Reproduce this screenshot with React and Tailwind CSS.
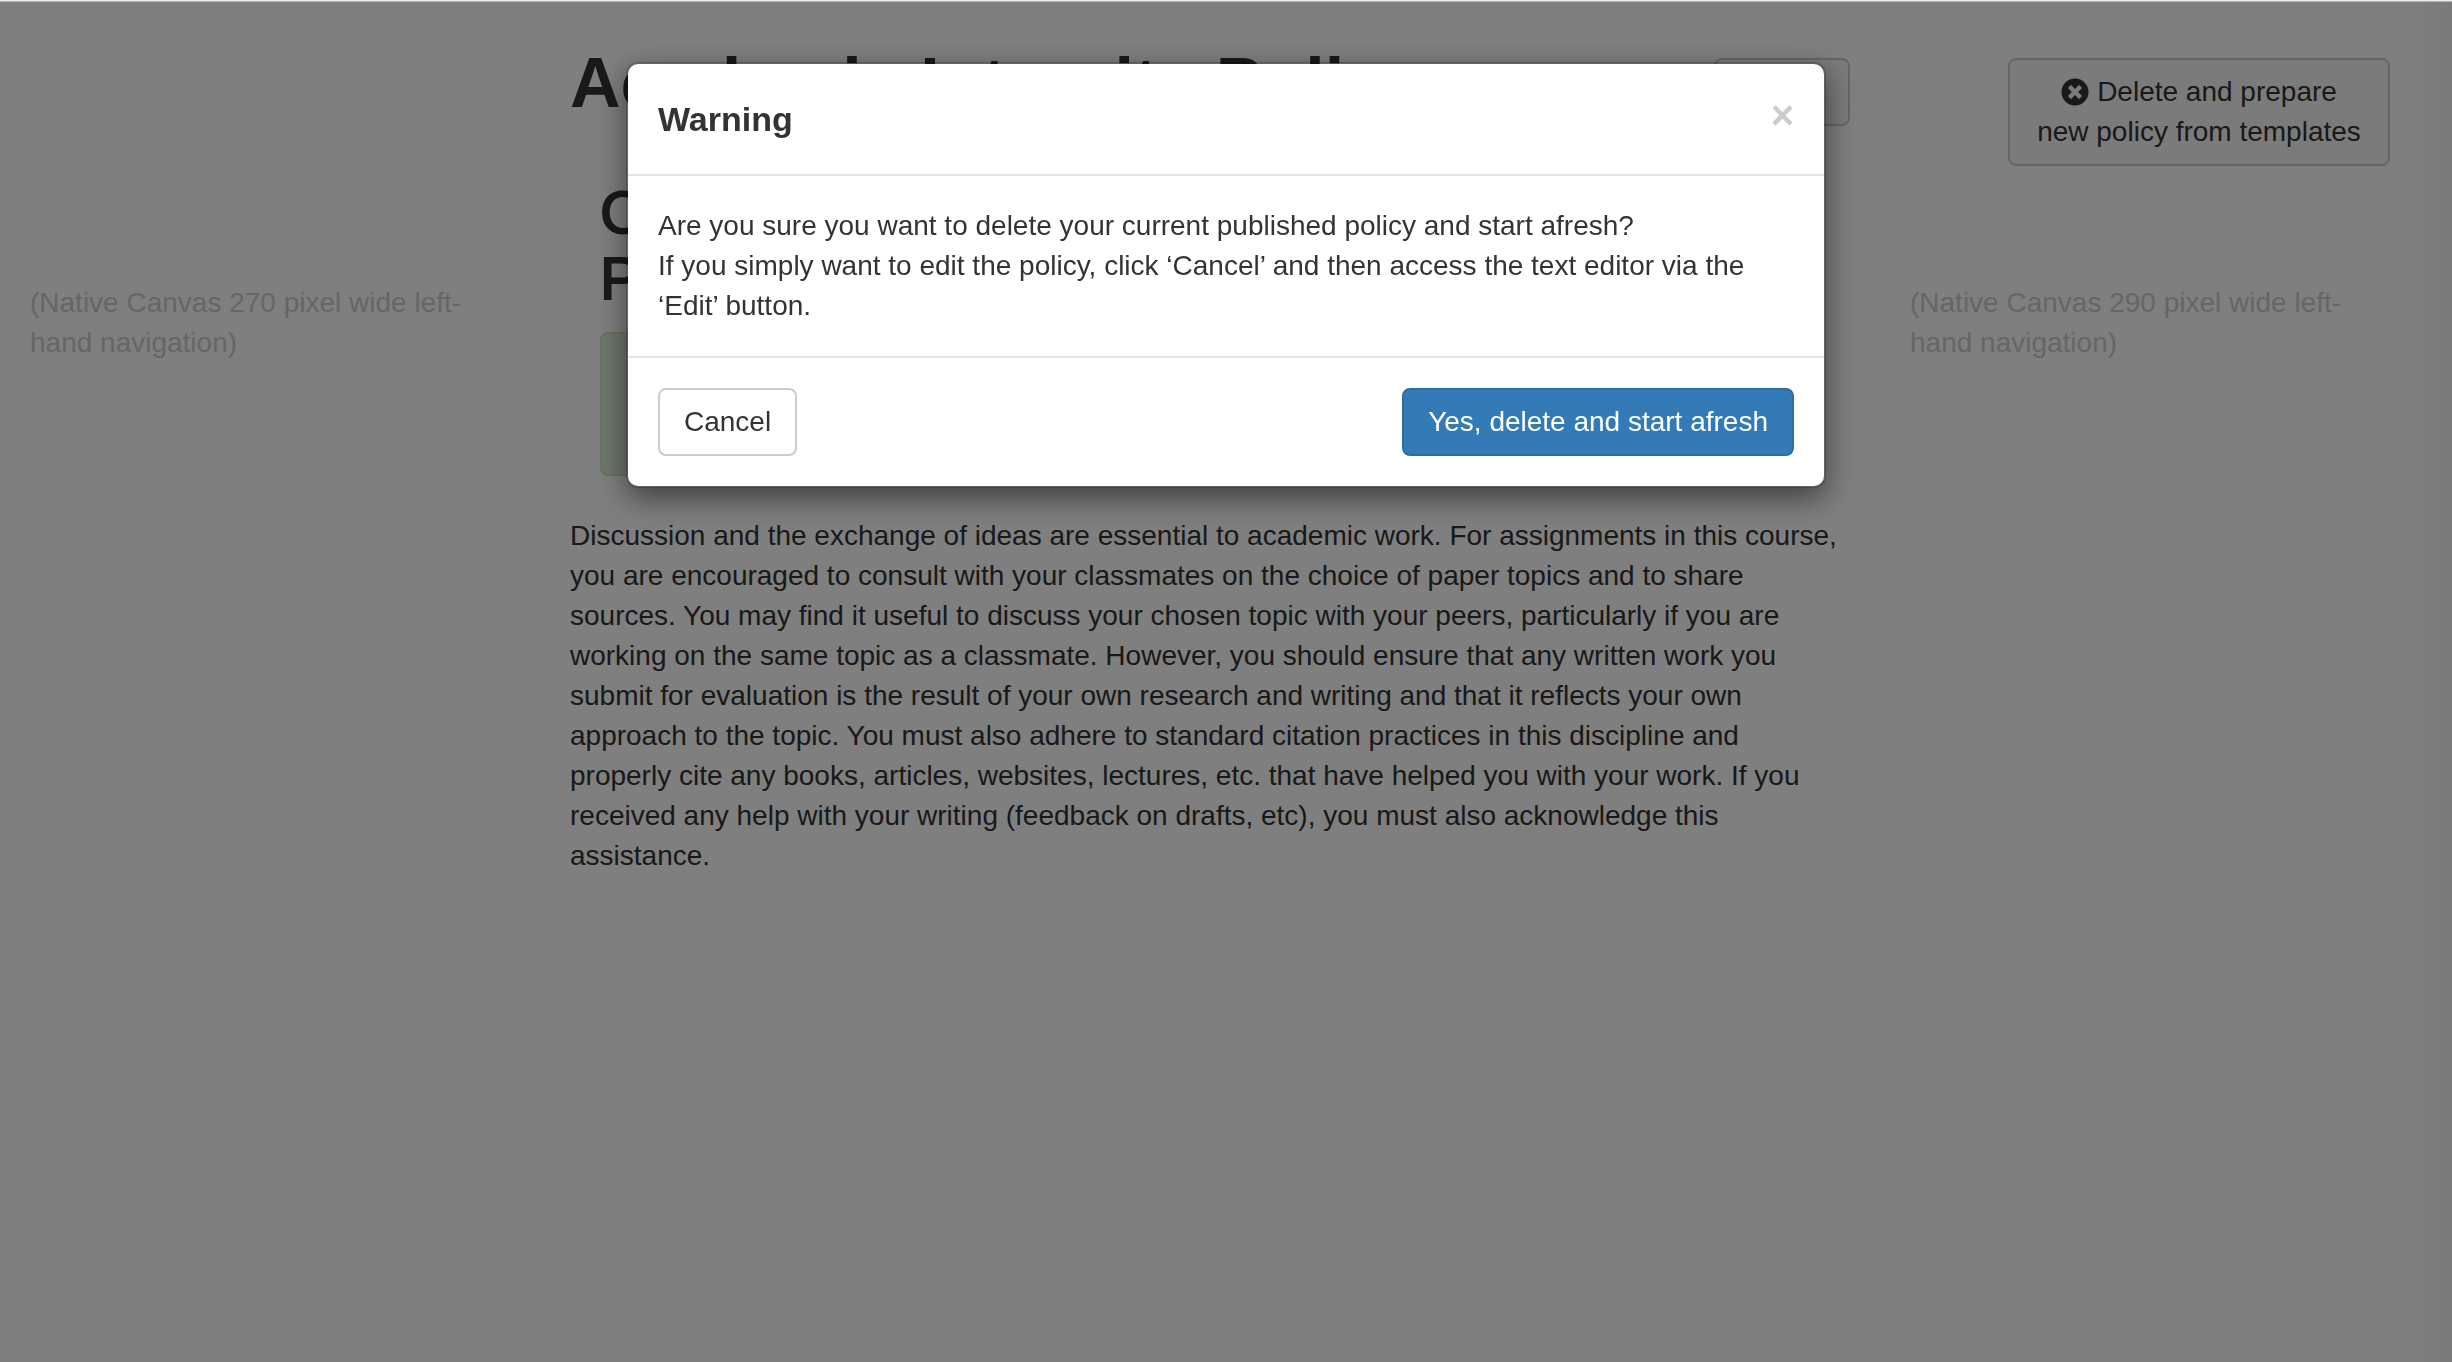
import { FaTimesCircle, FaPencilAlt } from "react-icons/fa";

const button = "rounded-lg border-2 border-[#ccc] px-6 py-3 text-center text-[#333]";

function Page() {
  return (
    <div className="flex items-start">
      <aside className="w-[540px] shrink-0 pt-[282px] pr-[60px] pl-[30px] text-[#ccc]">
        (Native Canvas 270 pixel wide left-hand navigation)
      </aside>
      <main className="min-w-0 grow px-[30px] pt-[43px]">
        <div className="flex items-start justify-between">
          <h1 className="text-[70px] leading-[79px] font-bold">
            Academic Integrity Policy
          </h1>
          <button type="button" className={`${button} mt-[14px] bg-[#f7f7f7]`}>
            <FaPencilAlt className="mr-2 inline-block size-7" />
            Edit
          </button>
        </div>
        <section className="px-[30px] pt-[54px]">
          <h2 className="text-[60px] leading-[66px] font-normal [-webkit-text-stroke:2px_currentColor]">
            Current
            <br />
            Policy
          </h2>
          <div className="mt-5 mb-10 h-[144px] rounded-lg border-2 border-[#d6e9c6] bg-[#dff0d8]" />
        </section>
        <p className="pr-2">
          Discussion and the exchange of ideas are essential to academic work. For
          assignments in this course, you are encouraged to consult with your
          classmates on the choice of paper topics and to share sources. You may find
          it useful to discuss your chosen topic with your peers, particularly if you
          are working on the same topic as a classmate. However, you should ensure
          that any written work you submit for evaluation is the result of your own
          research and writing and that it reflects your own approach to the topic.
          You must also adhere to standard citation practices in this discipline and
          properly cite any books, articles, websites, lectures, etc. that have helped
          you with your work. If you received any help with your writing (feedback on
          drafts, etc), you must also acknowledge this assistance.
        </p>
      </main>
      <aside className="w-[572px] shrink-0 pt-[57px] pl-[30px]">
        <div className="flex justify-end pr-[62px]">
          <button type="button" className={`${button} min-w-[382px] bg-[#f7f7f7]`}>
            <FaTimesCircle className="mr-2 mb-1 inline-block size-7" />
            Delete and prepare
            <br />
            new policy from templates
          </button>
        </div>
        <p className="pt-[117px] pr-[100px] text-[#ccc]">
          (Native Canvas 290 pixel wide left-hand navigation)
        </p>
      </aside>
    </div>
  );
}

function WarningDialog() {
  return (
    <div className="fixed inset-0 top-px overflow-auto border-t border-[#b0b3b2] bg-black/50 pt-[60px]">
      <div
        role="dialog"
        aria-modal="true"
        aria-labelledby="warning-title"
        className="mx-auto w-[1200px] max-w-full rounded-xl border-2 border-black/20 bg-white bg-clip-padding shadow-[0_10px_30px_rgba(0,0,0,0.5)]"
      >
        <header className="flex items-start justify-between border-b-2 border-[#e5e5e5] p-[30px]">
          <h4 id="warning-title" className="text-[34px] leading-[50px] font-bold">
            Warning
          </h4>
          <button
            type="button"
            aria-label="Close"
            className="text-[40px] leading-[42px] font-bold text-[#ccc]"
          >
            ×
          </button>
        </header>
        <div className="p-[30px]">
          <p>
            Are you sure you want to delete your current published policy and start
            afresh?
            <br />
            If you simply want to edit the policy, click ‘Cancel’ and then access the
            text editor via the ‘Edit’ button.
          </p>
        </div>
        <footer className="flex justify-between border-t-2 border-[#e5e5e5] p-[30px]">
          <button type="button" className={`${button} bg-white`}>
            Cancel
          </button>
          <button
            type="button"
            className="rounded-lg border-2 border-[#2e6da4] bg-[#337ab7] px-6 py-3 text-white"
          >
            Yes, delete and start afresh
          </button>
        </footer>
      </div>
    </div>
  );
}

export default function App() {
  return (
    <div className="min-h-screen border-t border-[#e9eded] bg-white bg-[linear-gradient(to_left,#f5f5f5,#ffffff_50px)] font-['Liberation_Sans',Arial,sans-serif] text-[28px] leading-[40px] text-[#333]">
      <Page />
      <WarningDialog />
    </div>
  );
}
